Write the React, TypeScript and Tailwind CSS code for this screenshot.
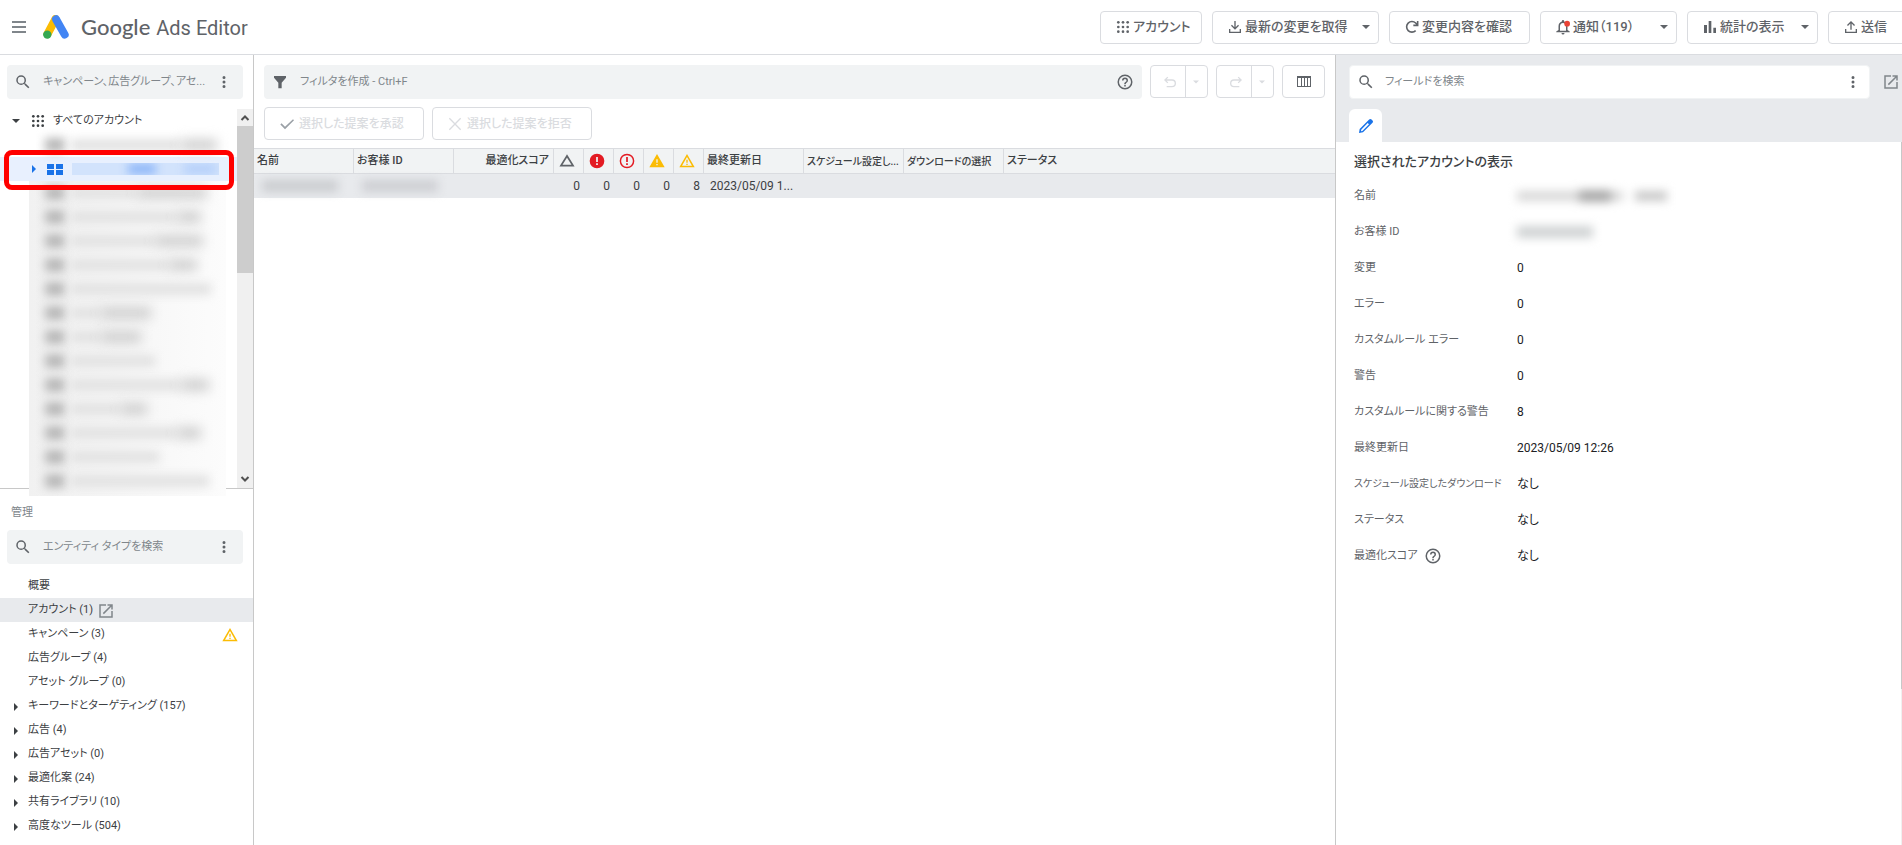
import type { ReactNode } from 'react';

interface Entity {
  label: string;
  expandable?: boolean;
  selected?: boolean;
  warning?: boolean;
}

interface Field {
  label: string;
  value: string;
  hidden?: boolean;
  help?: boolean;
  small?: boolean;
}

const entities: Entity[] = [
  { label: '概要' },
  { label: 'アカウント (1)', selected: true },
  { label: 'キャンペーン (3)', warning: true },
  { label: '広告グループ (4)' },
  { label: 'アセット グループ (0)' },
  { label: 'キーワードとターゲティング (157)', expandable: true },
  { label: '広告 (4)', expandable: true },
  { label: '広告アセット (0)', expandable: true },
  { label: '最適化案 (24)', expandable: true },
  { label: '共有ライブラリ (10)', expandable: true },
  { label: '高度なツール (504)', expandable: true },
];

const fields: Field[] = [
  { label: '名前', value: '', hidden: true },
  { label: 'お客様 ID', value: '', hidden: true },
  { label: '変更', value: '0' },
  { label: 'エラー', value: '0' },
  { label: 'カスタムルール エラー', value: '0' },
  { label: '警告', value: '0' },
  { label: 'カスタムルールに関する警告', value: '8' },
  { label: '最終更新日', value: '2023/05/09 12:26' },
  { label: 'スケジュール設定したダウンロード', value: 'なし', small: true },
  { label: 'ステータス', value: 'なし' },
  { label: '最適化スコア', value: 'なし', help: true },
];

// widths of the masked name: plain part, then the darker part
const maskedAccounts = [
  [66, 70], [106, 24], [84, 48], [98, 28], [140, 0], [30, 50], [30, 40],
  [84, 0], [110, 28], [50, 26], [106, 24], [88, 0], [138, 0],
];

/* ---------- icons ---------- */

interface IconProps {
  className?: string;
}

function Icon({ className = 'size-4', children }: IconProps & { children: ReactNode }) {
  return (
    <svg viewBox="0 0 24 24" fill="currentColor" className={`shrink-0 ${className}`} aria-hidden="true">
      {children}
    </svg>
  );
}

const SearchIcon = ({ className }: IconProps) => (
  <Icon className={className}>
    <path d="M15.5 14h-.79l-.28-.27A6.47 6.47 0 0 0 16 9.5 6.5 6.5 0 1 0 9.5 16c1.61 0 3.09-.59 4.23-1.57l.27.28v.79l5 4.99L20.49 19l-4.99-5zm-6 0a4.5 4.5 0 1 1 0-9 4.5 4.5 0 0 1 0 9z" />
  </Icon>
);

const MoreIcon = ({ className }: IconProps) => (
  <Icon className={className}>
    <path d="M12 8a2 2 0 1 0 0-4 2 2 0 0 0 0 4zm0 2a2 2 0 1 0 0 4 2 2 0 0 0 0-4zm0 6a2 2 0 1 0 0 4 2 2 0 0 0 0-4z" />
  </Icon>
);

const AppsIcon = ({ className }: IconProps) => (
  <Icon className={className}>
    {[4, 12, 20].map((y) => [4, 12, 20].map((x) => <circle key={`${x}-${y}`} cx={x} cy={y} r="2.3" />))}
  </Icon>
);

const HelpIcon = ({ className }: IconProps) => (
  <Icon className={className}>
    <path d="M11 18h2v-2h-2v2zm1-16a10 10 0 1 0 0 20 10 10 0 0 0 0-20zm0 18a8 8 0 1 1 0-16 8 8 0 0 1 0 16zm0-14a4 4 0 0 0-4 4h2a2 2 0 1 1 4 0c0 2-3 1.75-3 5h2c0-2.25 3-2.5 3-5a4 4 0 0 0-4-4z" />
  </Icon>
);

const OpenIcon = ({ className }: IconProps) => (
  <Icon className={className}>
    <path d="M19 19H5V5h7V3H3v18h18v-9h-2v7zM14 3v2h3.59l-9.83 9.83 1.41 1.41L19 6.41V10h2V3h-7z" />
  </Icon>
);

const DownloadIcon = () => (
  <Icon>
    <path d="M13 3h-2v9.2L7.4 8.6 6 10l6 6 6-6-1.4-1.4-3.6 3.6V3zM3 15v6h18v-6h-2v4H5v-4H3z" />
  </Icon>
);

const UploadIcon = () => (
  <Icon>
    <path d="M11 16h2V6.8l3.6 3.6L18 9l-6-6-6 6 1.4 1.4L11 6.8V16zM3 15v6h18v-6h-2v4H5v-4H3z" />
  </Icon>
);

const RefreshIcon = () => (
  <Icon>
    <path
      d="M17.500 17.500A8 8 0 1 1 17.500 6L20 8.500M20.500 3v6.500H14"
      fill="none"
      stroke="currentColor"
      strokeWidth="2.400"
    />
  </Icon>
);

const BellIcon = () => (
  <Icon className="size-[18px]">
    <path d="M12 22a2 2 0 0 0 2-2h-4a2 2 0 0 0 2 2zm6-6v-5c0-3.07-1.63-5.64-4.5-6.32V4a1.5 1.500 0 0 0-3 0v.68C7.64 5.36 6 7.92 6 11v5l-3 2v1h18v-1l-3-2zm-2 1H8v-6c0-2.48 1.510-4.500 4-4.500s4 2.020 4 4.500v6z" />
    <circle cx="17.500" cy="7.500" r="3.800" fill="#ea4335" />
  </Icon>
);

const ChartIcon = () => (
  <Icon>
    <path d="M3 9h4.500v12H3zM10 3h4v18h-4zM17 13h4v8h-4z" />
  </Icon>
);

const FilterIcon = () => (
  <Icon>
    <path d="M3 3h18v2.500L14.500 13v8.500h-5V13L3 5.500z" />
  </Icon>
);

const UndoIcon = ({ className }: IconProps) => (
  <Icon className={className}>
    <path d="M8 4 3 9l5 5 1.400-1.400L6.800 10H15a4 4 0 0 1 0 8H7v2h8a6 6 0 0 0 0-12H6.800l2.600-2.600z" />
  </Icon>
);

const ColumnsIcon = () => (
  <svg viewBox="0 0 14 11" className="h-[11px] w-3.5" aria-hidden="true">
    <path
      fill="currentColor"
      fillRule="evenodd"
      d="M0 0h14v11H0zM1 2v8h3V2zM5 2v8h2V2zM8 2v8h2V2zM11 2v8h2V2z"
    />
  </svg>
);

const CheckIcon = () => (
  <Icon className="size-4 text-[#9aa0a6]">
    <path d="M9 16.200 3.800 11l-1.800 1.800L9 20 22.500 6.500 21 5z" />
  </Icon>
);

const CloseIcon = () => (
  <Icon>
    <path d="M3.500 3.500l17 17M20.500 3.500l-17 17" stroke="currentColor" strokeWidth="2" />
  </Icon>
);

const TriangleIcon = () => (
  <Icon className="size-4 text-[#5f6368]">
    <path d="M12 4.500 3 19h18z" fill="none" stroke="currentColor" strokeWidth="2.600" />
  </Icon>
);

const ErrorIcon = ({ outline = false }) => (
  <Icon className="size-4 text-[#e31b23]">
    {outline ? (
      <path
        fillRule="evenodd"
        d="M12 1a11 11 0 1 0 0 22 11 11 0 0 0 0-22zm0 2.200a8.800 8.800 0 1 1 0 17.600 8.800 8.800 0 0 1 0-17.600zM10.700 6h2.600v7.500h-2.600zM10.700 15.500h2.600V18h-2.600z"
      />
    ) : (
      <path fillRule="evenodd" d="M12 1a11 11 0 1 0 0 22 11 11 0 0 0 0-22zM10.700 6h2.600v7.500h-2.600zM10.700 15.500h2.600V18h-2.600z" />
    )}
  </Icon>
);

const WarningIcon = ({ outline = false }) => (
  <Icon className="size-4 text-[#fbbc04]">
    {outline ? (
      <path fillRule="evenodd" d="M12 1.500.5 21.500h23zM12 6l7.500 13h-15zM11 10h2v4.500h-2zM11 16h2v2h-2z" />
    ) : (
      <path fillRule="evenodd" d="M12 1.500.5 21.500h23zM11 9.500h2v5h-2zM11 16.500h2v2h-2z" />
    )}
  </Icon>
);

const PencilIcon = () => (
  <Icon className="size-4 text-[#1a73e8]">
    <path
      fillRule="evenodd"
      d="M18.500 1.500a2.500 2.500 0 0 0-1.800.7L2.500 16.500 1.500 22.500l6-1L21.800 7.300a2.500 2.500 0 0 0 0-3.500l-1.500-1.500a2.500 2.500 0 0 0-1.800-.8zM14.500 7.500l2 2L6.500 19.500l-2 .3.300-2.300z"
    />
  </Icon>
);

const Caret = ({ className = '' }: IconProps) => (
  <svg viewBox="0 0 8 4" fill="currentColor" className={`h-1 w-2 shrink-0 ${className}`} aria-hidden="true">
    <path d="M0 0h8L4 4z" />
  </svg>
);

const RightCaret = ({ className = '' }: IconProps) => (
  <svg viewBox="0 0 4 8" fill="currentColor" className={`h-2 w-1 shrink-0 ${className}`} aria-hidden="true">
    <path d="M0 0l4 4-4 4z" />
  </svg>
);

const AdsLogo = () => (
  <svg viewBox="0 0 26 24" className="h-6 w-[26px]" aria-hidden="true">
    <path d="M12.500 4 4.500 19" stroke="#fbbc04" strokeWidth="8" strokeLinecap="round" />
    <path d="M13 4.200l8.700 15.400" stroke="#4285f4" strokeWidth="8" strokeLinecap="round" />
    <circle cx="4.300" cy="19.600" r="4.200" fill="#34a853" />
  </svg>
);

/* ---------- parts ---------- */

interface ToolbarButtonProps {
  icon: ReactNode;
  label: string;
  width: string;
  caret?: boolean;
}

function ToolbarButton({ icon, label, width, caret }: ToolbarButtonProps) {
  return (
    <button
      className={`flex h-[33px] shrink-0 items-center rounded border border-[#dadce0] bg-white pl-3.5 pr-2 text-[13px] font-medium text-[#5f6368] ${width}`}
    >
      <span className="flex w-4 shrink-0 justify-center">{icon}</span>
      <span className="ml-0.5 whitespace-nowrap">{label}</span>
      {caret && <Caret className="ml-auto" />}
    </button>
  );
}

function SearchBox({ placeholder }: { placeholder: string }) {
  return (
    <div className="flex h-[34px] items-center rounded bg-[#f1f3f4] pl-[7px] pr-2.5 text-[#5f6368]">
      <SearchIcon className="size-[18px]" />
      <input
        type="text"
        aria-label={placeholder}
        placeholder={placeholder}
        className="ml-[11px] min-w-0 flex-1 bg-transparent text-[11px] outline-none placeholder:text-[#80868b]"
      />
      <button aria-label="その他">
        <MoreIcon className="size-[18px]" />
      </button>
    </div>
  );
}

function HistoryButtons({ label, flip }: { label: string; flip?: boolean }) {
  return (
    <div className="flex h-[33px] shrink-0 rounded border border-[#dadce0] text-[#dadce0]">
      <button disabled aria-label={label} className="flex w-[34px] items-center justify-center pl-1">
        <UndoIcon className={flip ? 'size-4 -scale-x-100' : 'size-4'} />
      </button>
      <button
        disabled
        aria-label={`${label}の履歴`}
        className="flex w-[22px] items-center justify-center border-l border-[#dadce0]"
      >
        <Caret className="pr-0.5" />
      </button>
    </div>
  );
}

function Header() {
  return (
    <header className="flex h-[55px] shrink-0 items-center overflow-hidden border-b border-[#dadce0] pl-3">
      <button aria-label="メニュー" className="flex w-3.5 shrink-0 flex-col gap-[3px]">
        <span className="h-0.5 bg-[#80868b]" />
        <span className="h-0.5 bg-[#80868b]" />
        <span className="h-0.5 bg-[#80868b]" />
      </button>
      <div className="ml-[17px] flex shrink-0 items-center">
        <AdsLogo />
        <h1 className="ml-3 flex items-baseline gap-1.5 text-xl text-[#5f6368]">
          <span className="font-[Lato] text-[22px] font-medium">Google</span>
          <span>Ads Editor</span>
        </h1>
      </div>
      <div className="ml-auto -mr-4 flex shrink-0 gap-2.5">
        <ToolbarButton icon={<AppsIcon className="size-3.5" />} label="アカウント" width="w-[102px]" />
        <ToolbarButton icon={<DownloadIcon />} label="最新の変更を取得" width="w-[167px]" caret />
        <ToolbarButton icon={<RefreshIcon />} label="変更内容を確認" width="w-[141px]" />
        <ToolbarButton icon={<BellIcon />} label="通知（119）" width="w-[137px]" caret />
        <ToolbarButton icon={<ChartIcon />} label="統計の表示" width="w-[131px]" caret />
        <ToolbarButton icon={<UploadIcon />} label="送信" width="w-[90px]" />
      </div>
    </header>
  );
}

function MaskedRow({ plain, dark, nested }: { plain: number; dark: number; nested?: boolean }) {
  return (
    <div className={nested ? 'flex h-6 items-center pl-4' : 'flex h-6 items-center pl-[45px]'}>
      <span className="h-3.5 w-5 bg-[#b8b8b8] blur-[5px]" />
      <span className="ml-1.5 h-3 bg-[#e2e2e2] blur-[5px]" style={{ width: plain }} />
      <span className="h-3 bg-[#d0d0d0] blur-[6px]" style={{ width: dark }} />
    </div>
  );
}

function ScrollArrow() {
  return (
    <svg viewBox="0 0 16 17" className="h-[17px] w-4" fill="none" stroke="currentColor" strokeWidth="2" aria-hidden="true">
      <path d="M4.500 11 8 7.500l3.500 3.500" />
    </svg>
  );
}

function AccountTree() {
  return (
    <div className="relative h-[380px] border-b border-[#c8c8c8] text-[11px]">
      <div className="flex h-full">
        <div className="min-w-0 flex-1">
          <div className="flex h-6 items-center text-[#3c4043]">
            <Caret className="ml-3" />
            <AppsIcon className="ml-[11px] size-3.5" />
            <span className="ml-2">すべてのアカウント</span>
          </div>
          <MaskedRow plain={110} dark={36} />
          <div className="flex h-6 items-center bg-[#e8f0fe] text-[#1a73e8]">
            <RightCaret className="ml-8" />
            <svg viewBox="0 0 16 11" fill="currentColor" className="ml-[11px] h-[11px] w-4" aria-hidden="true">
              <path d="M0 0h7v5H0zM9 0h7v5H9zM0 6h7v5H0zM9 6h7v5H9z" />
            </svg>
            <div className="ml-[9px] flex h-3 w-[147px] items-center overflow-hidden bg-[#d2e3fc]">
              <span className="ml-14 h-2.5 w-7 bg-[#8ab4f8] blur-[5px]" />
              <span className="ml-7 h-2.5 w-8 bg-[#b4cffa] blur-[5px]" />
            </div>
          </div>
          <div className="relative ml-[29px] w-[197px] overflow-hidden bg-gradient-to-r from-[#f1f1f1] to-[#fcfcfc]">
            {maskedAccounts.map(([plain, dark], i) => (
              <MaskedRow key={i} plain={plain} dark={dark} nested />
            ))}
            <div className="h-[3px]" />
          </div>
        </div>
        <div className="flex w-4 flex-col items-center bg-[#f0f0f0] text-[#505050]">
          <ScrollArrow />
          <div className="h-[147px] w-full bg-[#cdcdcd]" />
          <div className="mt-auto rotate-180">
            <ScrollArrow />
          </div>
        </div>
      </div>
      <div className="absolute left-1 top-[41px] h-10 w-[230px] rounded-lg border-[5px] border-[#ff0000]" />
    </div>
  );
}

function Sidebar() {
  return (
    <aside className="flex w-[254px] shrink-0 flex-col border-r border-[#c8c8c8]">
      <div className="py-2.5 pl-[7px] pr-2.5">
        <SearchBox placeholder="キャンペーン、広告グループ、アセ..." />
      </div>
      <AccountTree />
      <h2 className="px-[11px] pb-2 pt-[15px] text-[11px] leading-[18px] text-[#80868b]">管理</h2>
      <div className="pl-[7px] pr-2.5">
        <SearchBox placeholder="エンティティ タイプを検索" />
      </div>
      <ul className="mt-2.5 text-[11px] text-[#3c4043]">
        {entities.map((entity) => (
          <li key={entity.label}>
            <button
              className={`flex h-6 w-full items-center pr-[15px] pt-px text-left ${entity.selected ? 'bg-[#e8eaed]' : ''}`}
            >
              <span className="flex w-7 shrink-0 pl-3.5">{entity.expandable && <RightCaret />}</span>
              <span>{entity.label}</span>
              {entity.selected && <OpenIcon className="ml-1 size-[18px] text-[#80868b]" />}
              {entity.warning && (
                <span className="ml-auto">
                  <WarningIcon outline />
                </span>
              )}
            </button>
          </li>
        ))}
      </ul>
    </aside>
  );
}

function AccountTable() {
  const th = 'border-y border-r border-[#dadce0] pl-[3px] text-left font-medium';
  const thIcon = 'border-y border-r border-[#dadce0] pl-[5px]';
  const td = 'px-1 text-right';

  return (
    <table className="mt-2 w-full table-fixed border-separate border-spacing-0 whitespace-nowrap text-[11px] text-[#3c4043]">
      <colgroup>
        <col className="w-[100px]" />
        <col className="w-[100px]" />
        <col className="w-[100px]" />
        <col className="w-[30px]" />
        <col className="w-[30px]" />
        <col className="w-[30px]" />
        <col className="w-[30px]" />
        <col className="w-[30px]" />
        <col className="w-[100px]" />
        <col className="w-[100px]" />
        <col className="w-[100px]" />
        <col />
      </colgroup>
      <thead>
        <tr className="h-[26px] bg-[#f1f3f4]">
          <th className={th}>名前</th>
          <th className={th}>お客様 ID</th>
          <th className="border-y border-r border-[#dadce0] pr-1 text-right font-medium">最適化スコア</th>
          <th className={thIcon} aria-label="変更"><TriangleIcon /></th>
          <th className={thIcon} aria-label="エラー"><ErrorIcon /></th>
          <th className={thIcon} aria-label="カスタムルール エラー"><ErrorIcon outline /></th>
          <th className={thIcon} aria-label="警告"><WarningIcon /></th>
          <th className={thIcon} aria-label="カスタムルールに関する警告"><WarningIcon outline /></th>
          <th className={th}>最終更新日</th>
          <th className={`${th} text-[10px]`}>スケジュール設定し...</th>
          <th className={`${th} text-[10px]`}>ダウンロードの選択</th>
          <th className="border-y border-[#dadce0] pl-[3px] text-left font-medium">ステータス</th>
        </tr>
      </thead>
      <tbody>
        <tr className="h-6 bg-[#e8eaed] text-xs">
          <td className="pl-2"><div className="h-3 w-[76px] bg-[#cbcdd0] blur-[5px]" /></td>
          <td className="pl-2"><div className="h-3 w-[76px] bg-[#cecfd3] blur-[5px]" /></td>
          <td />
          <td className={td}>0</td>
          <td className={td}>0</td>
          <td className={td}>0</td>
          <td className={td}>0</td>
          <td className={td}>8</td>
          <td className="pl-1.5">2023/05/09 1...</td>
          <td />
          <td />
          <td />
        </tr>
      </tbody>
    </table>
  );
}

function MainPanel() {
  return (
    <main className="min-w-0 flex-1">
      <div className="flex gap-2 pl-2.5 pr-2.5 pt-2.5">
        <div className="flex h-[34px] min-w-0 flex-1 items-center rounded bg-[#f1f3f4] px-2 text-[#5f6368]">
          <FilterIcon />
          <input
            type="text"
            aria-label="フィルタを作成"
            placeholder="フィルタを作成 - Ctrl+F"
            className="ml-3 min-w-0 flex-1 bg-transparent text-[11px] outline-none placeholder:text-[#80868b]"
          />
          <button aria-label="ヘルプ">
            <HelpIcon className="size-[18px]" />
          </button>
        </div>
        <HistoryButtons label="元に戻す" />
        <HistoryButtons label="やり直す" flip />
        <button
          aria-label="列"
          className="flex h-[33px] w-[43px] shrink-0 items-center justify-center rounded border border-[#dadce0] text-[#5f6368]"
        >
          <ColumnsIcon />
        </button>
      </div>
      <div className="mt-2 flex gap-2 px-2.5">
        <button
          disabled
          className="flex h-[33px] w-40 items-center gap-1 rounded border border-[#dadce0] pl-3.5 text-xs font-medium text-[#dadce0]"
        >
          <CheckIcon />
          選択した提案を承認
        </button>
        <button
          disabled
          className="flex h-[33px] w-40 items-center gap-1 rounded border border-[#dadce0] pl-3.5 text-xs font-medium text-[#dadce0]"
        >
          <CloseIcon />
          選択した提案を拒否
        </button>
      </div>
      <AccountTable />
    </main>
  );
}

function MaskedValue({ long }: { long: boolean }) {
  if (!long) return <div className="h-3 w-[76px] bg-[#d0d3d4] blur-[5px]" />;

  return (
    <div className="flex items-center blur-[5px]">
      <span className="h-2.5 w-[62px] bg-[#d8d8d8]" />
      <span className="h-3 w-8 bg-[#a8a8a8]" />
      <span className="h-2.5 w-3 bg-[#d8d8d8]" />
      <span className="ml-3 h-2.5 w-8 bg-[#c8c8c8]" />
    </div>
  );
}

function DetailPanel() {
  return (
    <section className="flex w-[567px] shrink-0 flex-col border-l border-[#c8c8c8]">
      <div className="bg-[#e8eaed] pl-[13px] pt-2.5">
        <div className="flex items-center">
          <div className="flex h-[34px] flex-1 items-center rounded border border-[#f1f3f4] bg-white px-[7px] text-[#5f6368]">
            <SearchIcon className="size-[18px]" />
            <input
              type="text"
              aria-label="フィールドを検索"
              placeholder="フィールドを検索"
              className="ml-2.5 min-w-0 flex-1 text-[11px] outline-none placeholder:text-[#80868b]"
            />
            <button aria-label="その他">
              <MoreIcon className="size-[18px]" />
            </button>
          </div>
          <button aria-label="別ウィンドウで開く" className="ml-3 mr-0.5 text-[#80868b]">
            <OpenIcon className="size-[18px]" />
          </button>
        </div>
        <button
          aria-label="編集"
          className="mt-2.5 flex h-[33px] w-[33px] items-center justify-center rounded-t-md bg-white"
        >
          <PencilIcon />
        </button>
      </div>
      <div className="h-[547px] shrink-0 border-r border-[#c8c8c8] pl-[18px] pt-2">
        <h2 className="text-[13px] leading-6 font-medium text-[#3c4043]">選択されたアカウントの表示</h2>
        <dl className="mt-1 text-xs">
          {fields.map((field) => (
            <div key={field.label} className="flex h-9 items-center">
              <dt
                className={`flex w-[163px] shrink-0 items-center gap-1.5 whitespace-nowrap text-[#5f6368] ${
                  field.small ? 'text-[10px]' : 'text-[11px]'
                }`}
              >
                {field.label}
                {field.help && <HelpIcon className="size-[18px]" />}
              </dt>
              <dd className="text-[#202124]">{field.hidden ? <MaskedValue long={field.label === '名前'} /> : field.value}</dd>
            </div>
          ))}
        </dl>
      </div>
      <div className="flex-1 border-r border-[#f0f0f0]" />
    </section>
  );
}

export default function App() {
  return (
    <div
      lang="ja"
      className="flex h-screen flex-col overflow-hidden bg-white font-[Roboto,'Noto_Sans_CJK_JP',sans-serif] [font-feature-settings:'palt']"
    >
      <Header />
      <div className="flex min-h-0 flex-1">
        <Sidebar />
        <MainPanel />
        <DetailPanel />
      </div>
    </div>
  );
}
